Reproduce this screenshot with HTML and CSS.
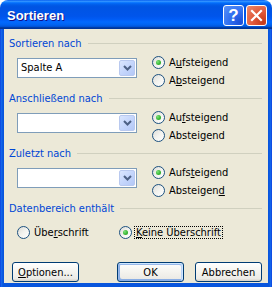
FILE: index.html
```html
<!DOCTYPE html>
<html lang="de">
<head>
<meta charset="utf-8">
<title>Sortieren</title>
<link rel="stylesheet" href="styles.css">
</head>
<body>
<div class="window">
  <div class="titlebar">
    <span class="title">Sortieren</span>
    <div class="tb-buttons">
      <span class="tb-btn tb-help">?</span>
      <span class="tb-btn tb-close"><svg width="13" height="13" viewBox="0 0 13 13"><path d="M2 2 L11 11 M11 2 L2 11" stroke="#fff" stroke-width="2.2" stroke-linecap="square"/></svg></span>
    </div>
  </div>
  <div class="frame">
    <div class="client">
      <section class="group">
        <div class="group-head"><span class="group-label">Sortieren nach</span><i class="rule"></i></div>
        <div class="group-body">
          <div class="combo"><span class="combo-text">Spalte A</span><span class="combo-btn"><svg width="9" height="6" viewBox="0 0 9 6"><path d="M1 1 L4.5 4.5 L8 1" fill="none" stroke="#4d6185" stroke-width="2"/></svg></span></div>
          <div class="radios">
            <div class="radio-row"><span class="radio checked"></span><span>A<u>u</u>fsteigend</span></div>
            <div class="radio-row"><span class="radio"></span><span>A<u>b</u>steigend</span></div>
          </div>
        </div>
      </section>
      <section class="group">
        <div class="group-head"><span class="group-label">Anschließend nach</span><i class="rule"></i></div>
        <div class="group-body">
          <div class="combo"><span class="combo-text"></span><span class="combo-btn"><svg width="9" height="6" viewBox="0 0 9 6"><path d="M1 1 L4.5 4.5 L8 1" fill="none" stroke="#4d6185" stroke-width="2"/></svg></span></div>
          <div class="radios">
            <div class="radio-row"><span class="radio checked"></span><span>Au<u>f</u>steigend</span></div>
            <div class="radio-row"><span class="radio"></span><span>Abstei<u>g</u>end</span></div>
          </div>
        </div>
      </section>
      <section class="group">
        <div class="group-head"><span class="group-label">Zuletzt nach</span><i class="rule"></i></div>
        <div class="group-body">
          <div class="combo"><span class="combo-text"></span><span class="combo-btn"><svg width="9" height="6" viewBox="0 0 9 6"><path d="M1 1 L4.5 4.5 L8 1" fill="none" stroke="#4d6185" stroke-width="2"/></svg></span></div>
          <div class="radios">
            <div class="radio-row"><span class="radio checked"></span><span>Aufs<u>t</u>eigend</span></div>
            <div class="radio-row"><span class="radio"></span><span>Absteigen<u>d</u></span></div>
          </div>
        </div>
      </section>
      <section class="group group-data">
        <div class="group-head"><span class="group-label">Datenbereich enthält</span><i class="rule"></i></div>
        <div class="data-radios">
          <div class="radio-row"><span class="radio"></span><span>Übe<u>r</u>schrift</span></div>
          <div class="radio-row radio-focus"><span class="radio checked"></span><span class="focus"><u>K</u>eine Überschrift</span></div>
        </div>
      </section>
      <div class="buttons">
        <span class="btn"><u>O</u>ptionen...</span>
        <span class="btn btn-default">OK</span>
        <span class="btn">Abbrechen</span>
      </div>
    </div>
  </div>
</div>
</body>
</html>
```
FILE: styles.css
```css
html, body {
  margin: 0;
  padding: 0;
  background: #ffffff;
}
body {
  width: 272px;
  height: 287px;
  font-family: "DejaVu Sans", "Liberation Sans", sans-serif;
  font-stretch: condensed;
  font-size: 11px;
  color: #000;
}
.window {
  width: 272px;
  height: 287px;
  display: flex;
  flex-direction: column;
}
.titlebar {
  height: 29px;
  box-sizing: border-box;
  border-radius: 8px 8px 0 0;
  padding: 5px 5px 0 7px;
  display: flex;
  align-items: flex-start;
  justify-content: space-between;
  background: linear-gradient(180deg, #0058ee 0%, #3593ff 4%, #288eff 6%, #127dff 8%, #036ffc 10%, #0262ee 14%, #0057e5 20%, #0054e3 24%, #0055eb 56%, #005bf5 66%, #026afe 76%, #0062ef 86%, #0052d6 92%, #0040ab 94%, #003092 100%);
}
.title {
  font-family: "Liberation Sans", sans-serif;
  font-stretch: normal;
  font-weight: bold;
  font-size: 13px;
  line-height: 21px;
  color: #fff;
  text-shadow: 1px 1px #0f1089;
}
.tb-buttons {
  display: flex;
  gap: 2px;
}
.tb-btn {
  width: 21px;
  height: 21px;
  box-sizing: border-box;
  border: 1px solid #fff;
  border-radius: 3px;
  display: flex;
  align-items: center;
  justify-content: center;
  color: #fff;
}
.tb-help {
  background: radial-gradient(circle at 85% 85%, #1c4fd8 0%, #2f6ef0 45%, #5b93f8 100%);
  font-family: "Liberation Sans", sans-serif;
  font-stretch: normal;
  font-weight: bold;
  font-size: 17px;
  line-height: 19px;
}
.tb-close {
  background: radial-gradient(circle at 85% 85%, #c4391a 0%, #e0583a 45%, #ec8a6c 100%);
}
.frame {
  flex: 1;
  display: flex;
  padding: 0 4px 4px 4px;
  background: linear-gradient(90deg, #0831d9 0, #166aee 1px, #0855dd 3px, #0855dd calc(100% - 3px), #166aee calc(100% - 1px), #0831d9 100%);
}
.client {
  flex: 1;
  background: #ece9d8;
  padding: 8px 6px 0 5px;
  display: flex;
  flex-direction: column;
}
.group {
  margin-bottom: 3px;
}
.group-head {
  height: 13px;
  display: flex;
  align-items: center;
  gap: 6px;
}
.group-label {
  color: #0046d5;
  line-height: 13px;
  white-space: nowrap;
}
.rule {
  flex: 1;
  height: 1px;
  background: #d0d0bf;
}
.group-body {
  display: flex;
  align-items: flex-start;
  margin-top: 3px;
  padding-left: 8px;
}
.combo {
  width: 120px;
  height: 20px;
  box-sizing: border-box;
  margin-top: 5px;
  border: 1px solid #7f9db9;
  background: #fff;
  display: flex;
  align-items: center;
  justify-content: space-between;
  padding: 1px;
}
.combo-text {
  padding-left: 2px;
  line-height: 16px;
}
.combo-btn {
  width: 16px;
  height: 16px;
  box-sizing: border-box;
  border: 1px solid #b9c9ef;
  border-radius: 2px;
  background: linear-gradient(135deg, #dae6fe 0%, #c1d3fb 60%, #b4c8f6 100%);
  display: flex;
  align-items: center;
  justify-content: center;
}
.radios {
  margin-left: 15px;
  display: flex;
  flex-direction: column;
}
.radio-row {
  height: 18px;
  display: flex;
  align-items: center;
  gap: 4px;
  white-space: nowrap;
}
.radio {
  width: 13px;
  height: 13px;
  box-sizing: border-box;
  border-radius: 50%;
  border: 1px solid #1c5180;
  background: linear-gradient(135deg, #dcdcd7 0%, #f3f3ef 50%, #ffffff 100%);
  display: flex;
  align-items: center;
  justify-content: center;
  flex: none;
}
.radio.checked::after {
  content: "";
  width: 5px;
  height: 5px;
  border-radius: 50%;
  background: radial-gradient(circle at 35% 35%, #7fe27c 0%, #3dbb39 50%, #1e9a1e 100%);
}
.data-radios {
  margin-top: 8px;
  padding-left: 8px;
  display: grid;
  grid-template-columns: 102px auto;
}
.radio-focus {
  gap: 2px;
}
.focus {
  border: 1px dotted #000;
  padding: 0 1px;
  line-height: 11px;
}
.buttons {
  margin-top: 18px;
  padding-left: 3px;
  display: flex;
  gap: 11px;
}
.btn {
  width: 67px;
  height: 20px;
  box-sizing: border-box;
  border: 1px solid #003c74;
  border-radius: 3px;
  background: linear-gradient(180deg, #ffffff 0%, #f4f3ee 50%, #ecebe6 86%, #d6d0c5 100%);
  display: flex;
  align-items: center;
  justify-content: center;
  white-space: nowrap;
}
.btn-default {
  margin-left: auto;
  box-shadow: inset -1px 1px #cee7ff, inset 1px 2px #98b8ea, inset -2px 2px #bcd4f6, inset 1px -1px #89ade4, inset 2px -2px #89ade4;
}
```
